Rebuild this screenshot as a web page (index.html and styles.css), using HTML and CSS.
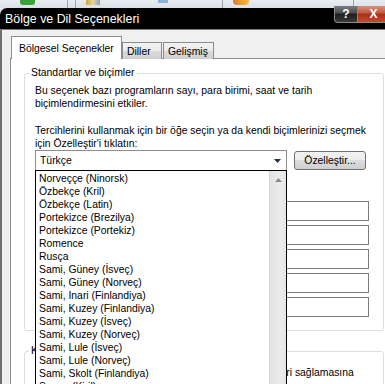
FILE: index.html
```html
<!DOCTYPE html>
<html>
<head>
  <title>Bölge ve Dil Seçenekleri</title>
  <meta charset="utf-8">
  <link rel="stylesheet" href="styles.css">
</head>
<body>
  <!-- desktop toolbar peeking out above the dialog -->
  <div class="desk-bar">
    <span class="desk-icon green"></span>
    <span class="desk-sep"></span>
    <span class="desk-sep"></span>
    <span class="desk-icon doc"></span>
    <span class="desk-icon blue"></span>
    <span class="desk-sep"></span>
    <span class="desk-icon orange"></span>
    <span class="desk-sep"></span>
  </div>

  <div class="window">
    <div class="titlebar">
      <span class="title">Bölge ve Dil Seçenekleri</span>
      <div class="caption-buttons">
        <span class="cap-btn help">?</span>
        <span class="cap-btn close">X</span>
      </div>
    </div>

    <div class="frame">
      <div class="tabs">
        <span class="tab active">Bölgesel Seçenekler</span>
        <span class="tab">Diller</span>
        <span class="tab">Gelişmiş</span>
      </div>

      <div class="panel">
        <fieldset class="group">
          <legend>Standartlar ve biçimler</legend>
          <p>Bu seçenek bazı programların sayı, para birimi, saat ve tarih<br>biçimlendirmesini etkiler.</p>
          <p class="gap">Tercihlerini kullanmak için bir öğe seçin ya da kendi biçimlerinizi seçmek<br>için Özelleştir'i tıklatın:</p>

          <div class="combo-row">
            <div class="combo">
              <span class="combo-value">Türkçe</span>
              <svg class="combo-arrow" width="7" height="4" viewBox="0 0 7 4"><path d="M0 0h7L3.5 4z" fill="#1c3058"/></svg>

              <!-- open dropdown list -->
              <div class="dropdown">
                <ul class="options">
                  <li>Norveççe (Ninorsk)</li>
                  <li>Özbekçe (Kril)</li>
                  <li>Özbekçe (Latin)</li>
                  <li>Portekizce (Brezilya)</li>
                  <li>Portekizce (Portekiz)</li>
                  <li>Romence</li>
                  <li>Rusça</li>
                  <li>Sami, Güney (İsveç)</li>
                  <li>Sami, Güney (Norveç)</li>
                  <li>Sami, Inari (Finlandiya)</li>
                  <li>Sami, Kuzey (Finlandiya)</li>
                  <li>Sami, Kuzey (İsveç)</li>
                  <li>Sami, Kuzey (Norveç)</li>
                  <li>Sami, Lule (İsveç)</li>
                  <li>Sami, Lule (Norveç)</li>
                  <li>Sami, Skolt (Finlandiya)</li>
                  <li>Sırpça (Kiril)</li>
                </ul>
                <div class="scrollbar">
                  <svg width="7" height="4" viewBox="0 0 7 4"><path d="M3.5 0L7 4H0z" fill="#8a8a8a"/></svg>
                </div>
              </div>
            </div>
            <button class="btn">Özelleştir...</button>
          </div>

          <!-- sample fields, their labels sit under the open list -->
          <div class="samples">
            <span class="box"></span>
            <span class="box"></span>
            <span class="box"></span>
            <span class="box"></span>
            <span class="box"></span>
          </div>
        </fieldset>

        <fieldset class="group second">
          <legend>Konum</legend>
          <p class="oneline">Bazı yazılımlar, haber ve hava durumu gibi yerel bilgileri sağlamasına</p>
        </fieldset>
      </div>
    </div>
  </div>
</body>
</html>
```

FILE: styles.css
```css
* {
  box-sizing: border-box;
}

body {
  margin: 0;
  width: 385px;
  height: 384px;
  overflow: hidden;
  background-color: #dfe5ec;
  font-family: "Liberation Sans", Arial, sans-serif;
  font-size: 10.4px;
  color: #000;
}

/* desktop strip */
.desk-bar {
  height: 8px;
  display: flex;
  align-items: flex-start;
  padding-left: 20px;
  background: linear-gradient(#e9edf2, #d9e0e8);
}

.desk-icon {
  display: block;
  height: 5px;
}

.desk-icon.green {
  width: 15px;
  background-color: #3aa23a;
  border-radius: 0 0 3px 3px;
}

.desk-icon.doc {
  width: 14px;
  margin-left: 10px;
  background: linear-gradient(90deg, #c9a640, #e8d79a 50%, #8aa0c8);
}

.desk-icon.blue {
  width: 10px;
  margin-left: 58px;
  height: 3px;
  background-color: #8fb0d8;
}

.desk-icon.orange {
  width: 16px;
  margin-left: 10px;
  background: linear-gradient(90deg, #e07a2a, #f4c040);
  border-radius: 0 0 4px 4px;
}

.desk-sep {
  display: block;
  width: 1px;
  height: 8px;
  margin-left: 32px;
  background-color: #9aa4b0;
}

.desk-sep + .desk-sep {
  margin-left: 7px;
}

.desk-icon.blue + .desk-sep {
  margin-left: 54px;
}

.desk-icon.orange + .desk-sep {
  margin-left: 104px;
}

/* window */
.window {
  width: 420px;
  display: flex;
  flex-direction: column;
}

.titlebar {
  height: 22px;
  display: flex;
  align-items: flex-start;
  background-color: #000;
  border-radius: 7px 7px 0 0;
  border-bottom: 1px solid #7a7a7a;
}

.title {
  flex: 1;
  padding: 4px 0 0 5px;
  color: #fff;
  font-size: 12.4px;
  line-height: 15px;
}

.caption-buttons {
  display: flex;
  margin-top: -2px;
}

.cap-btn {
  height: 17px;
  display: flex;
  justify-content: center;
  align-items: center;
  color: #fff;
  font-weight: bold;
  font-size: 12px;
  border: 1px solid #8a8a8a;
  border-top: none;
}

.cap-btn.help {
  width: 24px;
  border-radius: 0 0 0 4px;
  background: linear-gradient(#7d7d7d, #4a4a4a 45%, #1e1e1e 50%, #3a3a3a);
}

.cap-btn.close {
  width: 62px;
  padding-right: 30px;
  border-left: none;
  background: linear-gradient(#d8927f, #c0563d 45%, #a2301a 50%, #c44a2c);
}

.frame {
  flex: 1;
  height: 360px;
  background-color: #f0f0f0;
  border-left: 2px solid #707070;
  padding: 6px 0 0 8px;
}

/* tabs */
.tabs {
  display: flex;
  align-items: flex-end;
  margin-bottom: -1px;
  position: relative;
  z-index: 1;
}

.tab {
  height: 17px;
  padding: 2px 9px 0 8px;
  border: 1px solid #898c95;
  border-bottom: none;
  background: linear-gradient(#f3f3f3, #ebebeb 50%, #dcdcdc 50%, #cfcfcf);
  margin-left: 1px;
  line-height: 13px;
}

.tab.active {
  height: 23px;
  width: 111px;
  margin-left: 1px;
  padding: 5px 0 0 7px;
  background: #fff;
}

.tab.active + .tab {
  margin-left: 0;
  width: 40px;
  padding-left: 4px;
}

.tab:last-child {
  width: 51px;
  padding-left: 4px;
}

.panel {
  height: 340px;
  background-color: #fff;
  border: 1px solid #898c95;
  padding: 7px 0 0 13px;
}

/* group boxes */
.group {
  width: 360px;
  margin: 0;
  padding: 4px 14px 13px 10px;
  border: 1px solid #d5dfe5;
  border-radius: 3px;
}

.group legend {
  margin-left: -6px;
  padding: 0 2px;
  line-height: 14px;
}

.group p {
  margin: 0;
  line-height: 13px;
}

.group p.gap {
  margin-top: 14px;
}

.group.second {
  margin-top: 13px;
  padding-top: 8px;
}

.oneline {
  white-space: nowrap;
}

/* combo + button */
.combo-row {
  display: flex;
  align-items: flex-start;
  gap: 7px;
}

.combo {
  position: relative;
  width: 252px;
  height: 21px;
  border: 1px solid #8d8d8d;
  display: flex;
  align-items: center;
  padding: 0 0 0 4px;
  background-color: #fff;
}

.combo-value {
  flex: 1;
}

.combo-arrow {
  margin-right: 5px;
}

.btn {
  width: 72px;
  height: 19px;
  margin-top: 1px;
  padding: 0;
  font-family: inherit;
  font-size: 10.4px;
  color: #000;
  border: 1px solid #707070;
  border-radius: 3px;
  background: linear-gradient(#f2f2f2, #ebebeb 50%, #dddddd 50%, #cfcfcf);
}

.dropdown {
  position: absolute;
  top: 19px;
  left: -1px;
  width: 252px;
  height: 230px;
  border: 1px solid #000;
  background-color: #fff;
  display: flex;
  z-index: 2;
}

.options {
  flex: 1;
  list-style: none;
  margin: 0;
  padding: 1px 0 0 3px;
}

.options li {
  line-height: 13px;
  height: 13px;
}

.scrollbar {
  width: 17px;
  background: linear-gradient(90deg, #e2e2e2, #ececec 60%, #e6e6e6);
  border-left: 1px solid #d6d6d6;
  display: flex;
  justify-content: center;
  padding-top: 7px;
}

.scrollbar svg {
  display: block;
}

/* samples */
.samples {
  margin-top: 30px;
  display: flex;
  flex-direction: column;
  align-items: flex-end;
  gap: 4px;
}

.box {
  display: block;
  width: 160px;
  height: 20px;
  border: 1px solid #7a7a7a;
  background-color: #fff;
}
```
